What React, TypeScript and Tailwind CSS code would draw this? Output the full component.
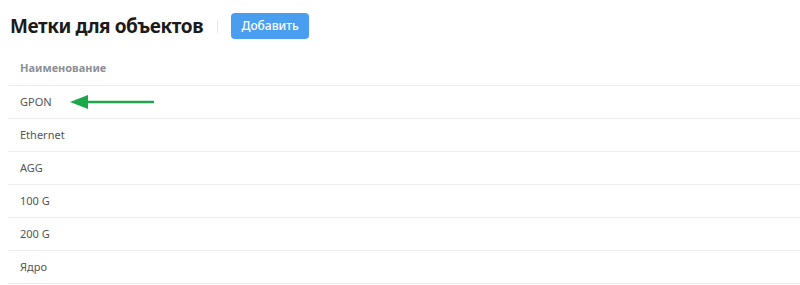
import React from 'react';

const tags = ['GPON', 'Ethernet', 'AGG', '100 G', '200 G', 'Ядро'];

function Arrow() {
  return (
    <svg width="86" height="16" viewBox="0 0 86 16" className="ml-[18px]">
      <path d="M14 8 L83 8" stroke="#1aa84a" strokeWidth="2.5" strokeLinecap="round" />
      <path d="M0 8 L18 1 L18 15 Z" fill="#1aa84a" />
    </svg>
  );
}

export default function App() {
  return (
    <div className="w-[800px] h-[285px] bg-white overflow-hidden font-['Noto_Sans',sans-serif]">
      {/* Header */}
      <div className="flex items-center h-[52px] pl-[10px]">
        <h1 className="text-[19px] font-bold text-[#1b1b1b] tracking-[-0.4px]">Метки для объектов</h1>
        <div className="w-px h-[13px] bg-[#e6e6e6] ml-[14px] mr-[13px]"></div>
        <button className="h-[26px] w-[78px] rounded-[4px] bg-[#4a9ef0] text-white text-[12px] font-medium">
          Добавить
        </button>
      </div>

      {/* Table */}
      <div className="ml-[8px]">
        <div className="h-[34px] flex items-center pl-[12px] border-b border-[#ececec]">
          <span className="text-[11px] font-bold text-[#8c9096]">Наименование</span>
        </div>
        {tags.map((t, i) => (
          <div key={t} className="h-[33px] flex items-center pl-[12px] border-b border-[#ececec]">
            <span className="text-[11px] text-[#555]">{t}</span>
            {i === 0 && <Arrow />}
          </div>
        ))}
      </div>
    </div>
  );
}
